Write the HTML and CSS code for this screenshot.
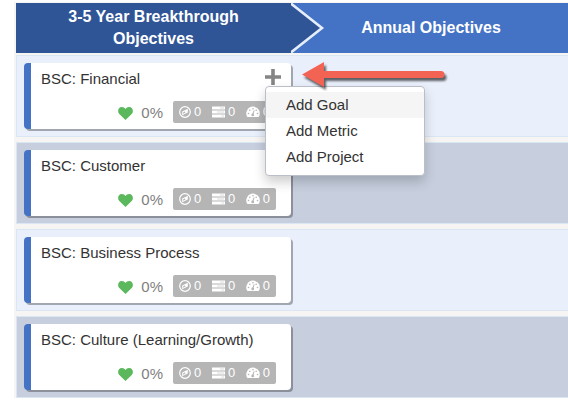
FILE: index.html
```
<!DOCTYPE html>
<html lang="en">
<head>
    <meta charset="UTF-8">
    <meta name="viewport" content="width=device-width, initial-scale=1.0">
    <title>Objectives</title>
    <link rel="stylesheet" href="styles.css">
</head>
<body>
    <!-- shared icons -->
    <svg class="sprite" aria-hidden="true">
        <symbol id="heart" viewBox="0 0 14 12">
            <path d="M7 12L1.200 6.500C-.8 4.300-.1 0 3.600 0 5.200 0 6.300.8 7 1.700 7.700.8 8.800 0 10.400 0c3.700 0 4.400 4.300 2.400 6.500z"/>
        </symbol>
        <symbol id="compass" viewBox="0 0 12 12">
            <circle cx="6" cy="6" r="5.300" fill="none" stroke="currentColor" stroke-width="1.200"/>
            <path fill-rule="evenodd" d="M8.800 2.700v3.800L3.200 9.300V5.500zM4.200 6.200v1.500L6.600 6.500 5.600 5.500z"/>
        </symbol>
        <symbol id="tasks" viewBox="0 0 13 12">
            <path fill-rule="evenodd" d="M0 .5h13v3H0zM8 1.700v.6h4v-.6zM0 4.500h13v3H0zM5 5.700v.6h7v-.6zM0 8.500h13v3H0zM9.500 9.700v.6H12v-.6z"/>
        </symbol>
        <symbol id="gauge" viewBox="0 0 14 12">
            <path d="M7 .6a6.800 6.800 0 0 1 6.800 6.800c0 1.400-.4 2.600-1.100 3.600H1.300A6.800 6.800 0 0 1 7 .6z"/>
            <g fill="#b5b5b5">
                <circle cx="2.500" cy="7.500" r=".8"/>
                <circle cx="3.800" cy="4.300" r=".8"/>
                <circle cx="7" cy="2.800" r=".8"/>
                <circle cx="10.200" cy="4.300" r=".8"/>
                <circle cx="11.500" cy="7.500" r=".8"/>
                <circle cx="6.700" cy="8.900" r="1.400"/>
                <path d="M6.200 8.200l1.500-4 .9.300L7.300 8.700z"/>
            </g>
        </symbol>
    </svg>

    <main class="board">
        <header class="board-head">
            <h2 class="head head-long">3-5 Year Breakthrough Objectives</h2>
            <h2 class="head head-annual">Annual Objectives</h2>
            <svg class="chevron" viewBox="0 0 34 50" aria-hidden="true">
                <path d="M0 0L31 25 0 50z" fill="#2f5597"/>
                <path d="M-2 -1L31 25-2 51" fill="none" stroke="#e6eefa" stroke-width="2.600"/>
            </svg>
        </header>

        <section class="row">
            <article class="card">
                <div class="card-top">
                    <h3>BSC: Financial</h3>
                    <div class="add">
                        <button class="add-button" type="button" aria-label="Add">
                            <svg width="16" height="16" viewBox="0 0 16 16"><path d="M8 0v16M0 8h16" stroke="#858585" stroke-width="3.600"/></svg>
                        </button>
                        <div class="menu">
                            <a class="active" href="#">Add Goal</a>
                            <a href="#">Add Metric</a>
                            <a href="#">Add Project</a>
                        </div>
                        <svg class="pointer" width="152" height="34" viewBox="0 0 152 34" aria-hidden="true">
                            <path d="M2 14.500L24 2v9h117a3.500 3.500 0 0 1 0 7H24v9z"/>
                        </svg>
                    </div>
                </div>
                <div class="card-stats">
                    <svg class="heart"><use href="#heart"/></svg>
                    <span class="percent">0%</span>
                    <div class="counts">
                        <span><svg class="compass"><use href="#compass"/></svg>0</span>
                        <span><svg class="tasks"><use href="#tasks"/></svg>0</span>
                        <span><svg class="gauge"><use href="#gauge"/></svg>0</span>
                    </div>
                </div>
            </article>
        </section>

        <section class="row row-dark">
            <article class="card">
                <div class="card-top">
                    <h3>BSC: Customer</h3>
                </div>
                <div class="card-stats">
                    <svg class="heart"><use href="#heart"/></svg>
                    <span class="percent">0%</span>
                    <div class="counts">
                        <span><svg class="compass"><use href="#compass"/></svg>0</span>
                        <span><svg class="tasks"><use href="#tasks"/></svg>0</span>
                        <span><svg class="gauge"><use href="#gauge"/></svg>0</span>
                    </div>
                </div>
            </article>
        </section>

        <section class="row">
            <article class="card">
                <div class="card-top">
                    <h3>BSC: Business Process</h3>
                </div>
                <div class="card-stats">
                    <svg class="heart"><use href="#heart"/></svg>
                    <span class="percent">0%</span>
                    <div class="counts">
                        <span><svg class="compass"><use href="#compass"/></svg>0</span>
                        <span><svg class="tasks"><use href="#tasks"/></svg>0</span>
                        <span><svg class="gauge"><use href="#gauge"/></svg>0</span>
                    </div>
                </div>
            </article>
        </section>

        <section class="row row-dark">
            <article class="card">
                <div class="card-top">
                    <h3>BSC: Culture (Learning/Growth)</h3>
                </div>
                <div class="card-stats">
                    <svg class="heart"><use href="#heart"/></svg>
                    <span class="percent">0%</span>
                    <div class="counts">
                        <span><svg class="compass"><use href="#compass"/></svg>0</span>
                        <span><svg class="tasks"><use href="#tasks"/></svg>0</span>
                        <span><svg class="gauge"><use href="#gauge"/></svg>0</span>
                    </div>
                </div>
            </article>
        </section>
    </main>
</body>
</html>
```

FILE: styles.css
```
* {
    box-sizing: border-box;
}
body {
    margin: 0;
    padding: 2px 0 0 14px;
    background: #ffffff;
    color: #333333;
    font-family: "Liberation Sans", Arial, sans-serif;
    font-size: 15px;
}
h2, h3 {
    margin: 0;
}
.sprite {
    display: none;
}
.board {
    display: flex;
    flex-direction: column;
    gap: 5px;
    padding: 1px 0 0 2px;
    background: #f7f4f4;
}

/* column headings */
.board-head {
    position: relative;
    display: grid;
    grid-template-columns: 275px 1fr;
    margin-bottom: -3px;
}
.head {
    display: flex;
    align-items: center;
    justify-content: center;
    min-height: 50px;
    color: #ffffff;
    font-size: 16px;
    line-height: 22px;
    text-align: center;
}
.head-long {
    padding: 0 40px;
    background: #2f5597;
}
.head-annual {
    padding-left: 3px;
    background: #4472c4;
}
.chevron {
    position: absolute;
    top: 0;
    left: 275px;
    width: 34px;
    height: 100%;
}

/* rows and cards */
.row {
    padding: 7px;
    border: 1px solid #dbe6f4;
    border-right: 0;
    background: #e9f0fb;
}
.row-dark {
    background: #c7cfdf;
}
.card {
    display: flex;
    flex-direction: column;
    gap: 12px;
    width: 267px;
    padding: 6px 15px 6px 10px;
    border-left: 7px solid #4472c4;
    border-radius: 4px;
    background: #ffffff;
    box-shadow: 2px 2px 0 rgba(0, 0, 0, 0.3);
}
.card-top {
    display: flex;
    justify-content: space-between;
}
.card h3 {
    font-size: 15px;
    font-weight: normal;
    line-height: 20px;
}
.card-stats {
    display: flex;
    align-items: center;
    justify-content: flex-end;
    height: 22px;
}
.heart {
    width: 15px;
    height: 13px;
    margin: 2px 8px 0 0;
    fill: #5cb85c;
}
.percent {
    margin-right: 10px;
    padding-top: 2px;
    color: #808080;
    line-height: 22px;
}
.counts {
    display: flex;
    justify-content: space-between;
    width: 103px;
    padding: 0 6px;
    border-radius: 2px;
    background: #b5b5b5;
    color: #ffffff;
    font-size: 13px;
    line-height: 22px;
}
.counts span {
    display: flex;
    align-items: center;
    gap: 3px;
}
.counts svg {
    height: 12px;
    fill: currentColor;
}
.compass {
    width: 12px;
}
.tasks {
    width: 13px;
}
.gauge {
    width: 14px;
}

/* add menu */
.add {
    position: relative;
    width: 16px;
    height: 20px;
    margin-right: -5px;
}
.add-button {
    display: block;
    padding: 0;
    border: 0;
    background: none;
    cursor: pointer;
}
.add-button svg {
    display: block;
}
.menu {
    position: absolute;
    top: 17px;
    left: 0;
    z-index: 1;
    width: 160px;
    padding: 5px 0;
    border: 1px solid #b9bec8;
    border-radius: 4px;
    background: #ffffff;
    box-shadow: 0 6px 12px rgba(0, 0, 0, 0.2);
}
.menu a {
    display: block;
    padding: 0 20px;
    color: #333333;
    line-height: 26px;
    text-decoration: none;
}
.menu a.active {
    background: #f5f5f5;
}
.pointer {
    position: absolute;
    top: -9px;
    left: 35px;
    z-index: 2;
    fill: #f26354;
    filter: drop-shadow(2px 3px 1px rgba(0, 0, 0, 0.6));
}
```
